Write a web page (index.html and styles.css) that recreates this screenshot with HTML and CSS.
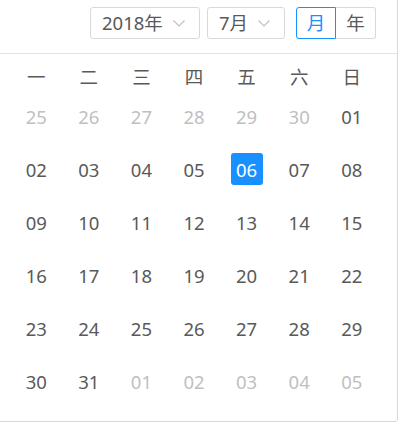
FILE: index.html
```html
<!DOCTYPE html>
<html lang="zh">
<head>
<meta charset="utf-8">
<link rel="stylesheet" href="styles.css">
</head>
<body>
<div class="card">
  <div class="header">
    <div class="select year"><span class="val">2018年</span><svg class="arrow" viewBox="0 0 12 7" width="12" height="7"><polyline points="0.5,0.5 6,6 11.5,0.5" fill="none" stroke="#bfbfbf" stroke-width="1.1"/></svg></div>
    <div class="select month"><span class="val">7月</span><svg class="arrow" viewBox="0 0 12 7" width="12" height="7"><polyline points="0.5,0.5 6,6 11.5,0.5" fill="none" stroke="#bfbfbf" stroke-width="1.1"/></svg></div>
    <div class="radio">
      <span class="rb active">月</span><span class="rb">年</span>
    </div>
  </div>
  <div class="body">
    <div class="grid week">
      <span>一</span><span>二</span><span>三</span><span>四</span><span>五</span><span>六</span><span>日</span>
    </div>
    <div class="grid dates">
      <span class="off">25</span><span class="off">26</span><span class="off">27</span><span class="off">28</span><span class="off">29</span><span class="off">30</span><span>01</span>
      <span>02</span><span>03</span><span>04</span><span>05</span><span class="sel">06</span><span>07</span><span>08</span>
      <span>09</span><span>10</span><span>11</span><span>12</span><span>13</span><span>14</span><span>15</span>
      <span>16</span><span>17</span><span>18</span><span>19</span><span>20</span><span>21</span><span>22</span>
      <span>23</span><span>24</span><span>25</span><span>26</span><span>27</span><span>28</span><span>29</span>
      <span>30</span><span>31</span><span class="off">01</span><span class="off">02</span><span class="off">03</span><span class="off">04</span><span class="off">05</span>
    </div>
  </div>
</div>
</body>
</html>
```

FILE: styles.css
```css
html, body {
  margin: 0;
  padding: 0;
  background: #fff;
  overflow: hidden;
}
body {
  font-family: "Noto Sans", "Noto Sans CJK SC", sans-serif;
  font-size: 18.5px;
  color: #595959;
}
.card {
  box-sizing: border-box;
  width: 408px;
  margin: -9px 0 0 -10px;
  border: 1px solid #d9d9d9;
  border-radius: 3px;
  background: #fff;
}
.header {
  display: flex;
  justify-content: flex-end;
  align-items: center;
  padding: 15px 21px 14px 0;
  border-bottom: 1px solid #e3e3e3;
}
.select {
  box-sizing: border-box;
  height: 32px;
  border: 1px solid #d9d9d9;
  border-radius: 3px;
  display: flex;
  align-items: center;
  justify-content: space-between;
  padding: 0 14px 0 11px;
  margin-right: 7px;
}
.select.year { width: 110px; }
.select.month { width: 78px; margin-right: 11px; }
.val { line-height: 30px; }
.arrow { display: block; margin-top: 1px; }
.radio {
  display: flex;
  height: 32px;
}
.rb {
  box-sizing: border-box;
  width: 40px;
  height: 32px;
  line-height: 30px;
  text-align: center;
  border: 1px solid #d9d9d9;
}
.rb:first-child {
  border-radius: 3px 0 0 3px;
  width: 40px;
}
.rb:last-child {
  border-left: none;
  border-radius: 0 3px 3px 0;
}
.rb.active {
  color: #1890ff;
  border-color: #1890ff;
}
.body {
  padding: 11px 19px 13px;
}
.grid {
  display: grid;
  grid-template-columns: repeat(7, 1fr);
}
.week span {
  text-align: center;
  line-height: 24px;
  height: 25px;
}
.dates span {
  height: 53px;
  display: flex;
  align-items: center;
  justify-content: center;
}
.dates span.off { color: #bfbfbf; }
.dates span.sel {
  color: #fff;
  position: relative;
}
.dates span.sel::before {
  content: "";
  position: absolute;
  left: 50%;
  top: 50%;
  width: 32px;
  height: 32px;
  margin: -17px 0 0 -16px;
  background: #1890ff;
  border-radius: 3px;
  z-index: 0;
}
.dates span.sel { z-index: 0; }
.dates span.sel { isolation: isolate; }
.dates span.sel::before { z-index: -1; }
```
